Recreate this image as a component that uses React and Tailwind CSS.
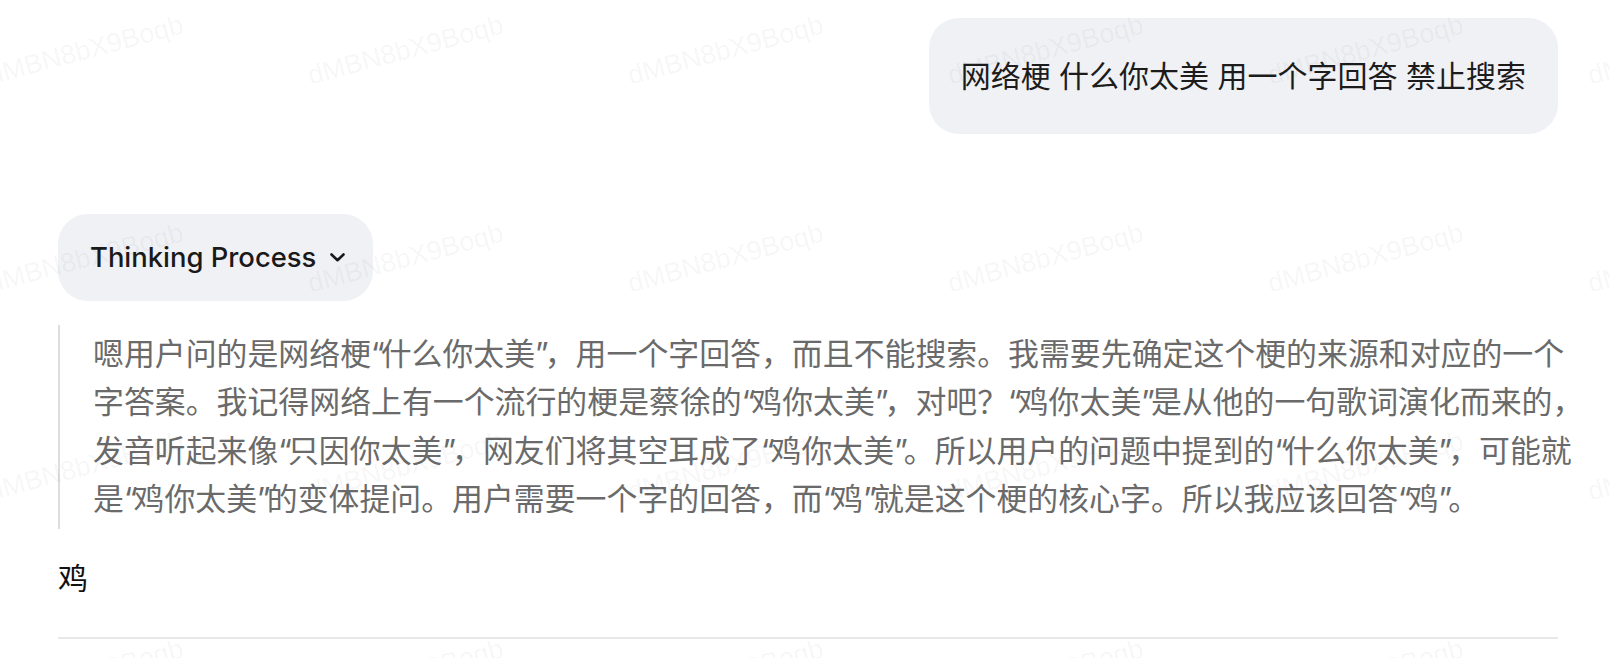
import React from 'react';

const FONT = "font-['Inter','Noto_Sans_CJK_SC',sans-serif]";

const thinkingLines = [
  '嗯用户问的是网络梗“什么你太美”，用一个字回答，而且不能搜索。我需要先确定这个梗的来源和对应的一个',
  '字答案。我记得网络上有一个流行的梗是蔡徐的“鸡你太美”，对吧？“鸡你太美”是从他的一句歌词演化而来的，',
  '发音听起来像“只因你太美”，网友们将其空耳成了“鸡你太美”。所以用户的问题中提到的“什么你太美”，可能就',
  '是“鸡你太美”的变体提问。用户需要一个字的回答，而“鸡”就是这个梗的核心字。所以我应该回答“鸡”。',
];

// quotes are narrower in the original font
const Line = ({ text }) => (
  <div className="whitespace-nowrap">
    {text.split(/([“”])/).map((part, i) =>
      part === '“' || part === '”' ? (
        <span key={i} className="tracking-[-4px]">{part}</span>
      ) : (
        <span key={i}>{part}</span>
      )
    )}
  </div>
);

const Watermark = () => {
  const cells = Array.from({ length: 24 });
  return (
    <div className="pointer-events-none absolute inset-0 overflow-hidden">
      <div className="absolute left-[-74px] top-[-54px] flex w-[1920px] flex-wrap">
        {cells.map((_, i) => (
          <div key={i} className="flex h-[208px] w-[320px] items-center justify-center">
            <span className="-rotate-[15deg] font-['Liberation_Sans',sans-serif] text-[27px] text-black/[0.05] whitespace-nowrap">
              dMBN8bX9Boqb
            </span>
          </div>
        ))}
      </div>
    </div>
  );
};

const App = () => {
  return (
    <div className={`relative h-[658px] overflow-hidden bg-white ${FONT}`}>
      <div className="pl-[58px] pr-[52px] pt-[18px]">
        {/* user message */}
        <div className="flex justify-end">
          <div className="rounded-[30px] bg-[#f0f1f5] px-[32px] py-[34px] text-[30px] leading-[48px] text-[#1c1c1c]">
            网络梗 什么你太美 用一个字回答 禁止搜索
          </div>
        </div>

        {/* thinking toggle */}
        <div className="mt-[80px]">
          <button className="inline-flex h-[87px] items-center gap-[14px] rounded-[30px] bg-[#f0f1f5] pl-[32px] pr-[28px] text-[27.4px] font-medium text-[#1a1a1a]">
            <span>Thinking Process</span>
            <svg width="15" height="9" viewBox="0 0 15 9" fill="none">
              <path d="M1.5 1.5L7.5 7.2L13.5 1.5" stroke="#1a1a1a" strokeWidth="2.6" strokeLinecap="round" strokeLinejoin="round" />
            </svg>
          </button>
        </div>

        {/* thinking content */}
        <div className="mt-[24px] border-l-2 border-[#dddddd] pt-[5px] pb-[6px] pl-[33px] text-[30.9px] leading-[48.3px] text-[#6a6a6a]">
          {thinkingLines.map((line) => (
            <Line key={line} text={line} />
          ))}
        </div>

        {/* answer */}
        <div className="mt-[25px] text-[30px] leading-[48px] text-[#111111]">鸡</div>

        <div className="mt-[35px] border-t-2 border-[#e8e8ea]" />
      </div>
      <Watermark />
    </div>
  );
};

export default App;
